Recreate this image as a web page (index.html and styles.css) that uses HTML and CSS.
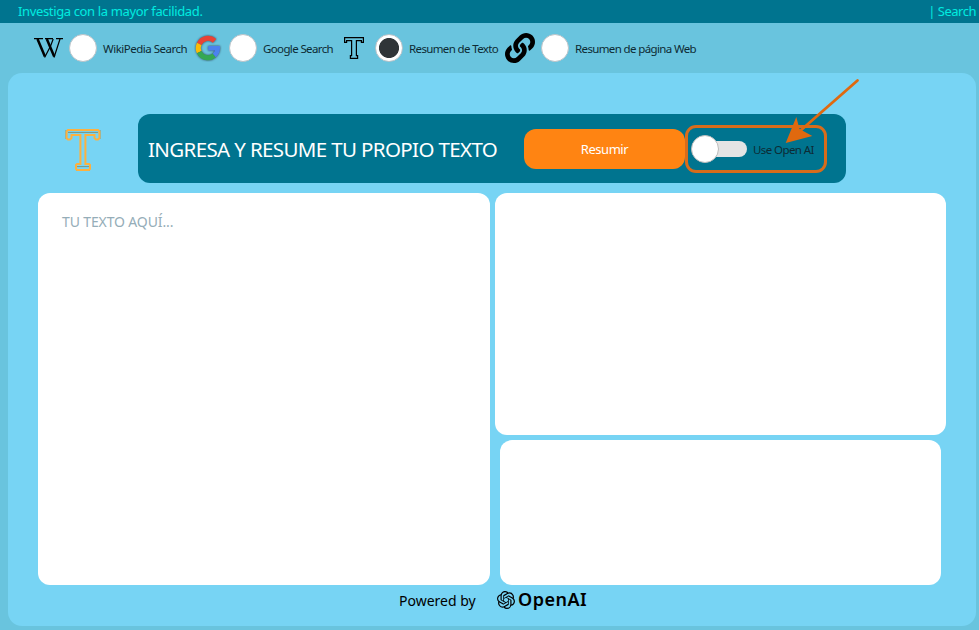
FILE: index.html
```html
<!DOCTYPE html>
<html lang="es">
<head>
<meta charset="utf-8">
<title>Search</title>
<link rel="stylesheet" href="styles.css">
</head>
<body>
<header class="titlebar"><span class="slogan">Investiga con la mayor facilidad.</span><span class="search">| Search</span></header>
<nav class="modes">
  <label class="mode mode-wiki">
    <svg class="icon" width="30" height="24" viewBox="0 0 30 24" fill="none" stroke="#000"><path d="M0 2.6h9M11 2.6h8M22 2.6h7" stroke-width="1.3"/><path d="M3.5 3l7.4 17.5M12.8 3l7.4 17.5" stroke-width="2.5"/><path d="M10.6 21.5l6-11.5 2.6-7M20 21.5L26 3" stroke-width="1.2"/></svg>
    <span class="radio"></span><span class="caption">WikiPedia Search</span>
  </label>
  <label class="mode mode-google">
    <svg class="icon" width="28" height="28" viewBox="0 0 28 28" fill="none" stroke-width="5"><g class="shadow"><path stroke="#ea4335" d="M5.2 10A9.7 9.7 0 0 1 20.6 6.9"/><path stroke="#fbbc05" d="M5.2 18.2A9.7 9.7 0 0 1 5.2 9.8"/><path stroke="#34a853" d="M20.4 21.3A9.7 9.7 0 0 1 5.2 18.1"/><path stroke="#4c82ee" d="M14.2 14.2H23.7A9.7 9.7 0 0 1 20.3 21.4" stroke-width="4.6"/></g></svg>
    <span class="radio"></span><span class="caption">Google Search</span>
  </label>
  <label class="mode mode-text">
    <svg class="icon" width="20" height="22" viewBox="0 0 20 22" fill="none" stroke="#000" stroke-width="1.2"><path d="M.6.6H19.4V5.4H17.4V3.6H12.4V18.6H13.6V21.4H6.4V18.6H7.6V3.6H2.6V5.4H.6Z"/></svg>
    <span class="radio on"></span><span class="caption">Resumen de Texto</span>
  </label>
  <label class="mode mode-web">
    <svg class="icon" width="30" height="30" viewBox="0 0 512 512"><path d="M326.612 185.391c59.747 59.809 58.927 155.698.36 214.59-.11.12-.24.25-.36.37l-67.2 67.2c-59.27 59.27-155.699 59.262-214.96 0-59.27-59.26-59.27-155.7 0-214.96l37.106-37.106c9.84-9.84 26.786-3.3 27.294 10.606.648 17.722 3.826 35.527 9.69 52.721 1.986 5.822.567 12.262-3.783 16.612l-13.087 13.087c-28.026 28.026-28.905 73.66-1.155 101.96 28.024 28.579 74.086 28.749 102.325.51l67.2-67.19c28.191-28.191 28.073-73.757 0-101.83-3.701-3.694-7.429-6.564-10.341-8.569a16.037 16.037 0 0 1-6.947-12.606c-.396-10.567 3.348-21.456 11.698-29.806l21.054-21.055c5.521-5.521 14.182-6.199 20.584-1.731a152.482 152.482 0 0 1 20.522 17.197zM467.547 44.449c-59.261-59.262-155.69-59.27-214.96 0l-67.2 67.2c-.12.12-.25.25-.36.37-58.566 58.892-59.387 154.781.36 214.59a152.454 152.454 0 0 0 20.521 17.196c6.402 4.468 15.064 3.789 20.584-1.731l21.054-21.055c8.35-8.35 12.094-19.239 11.698-29.806a16.037 16.037 0 0 0-6.947-12.606c-2.912-2.005-6.64-4.875-10.341-8.569-28.073-28.073-28.191-73.639 0-101.83l67.2-67.19c28.239-28.239 74.3-28.069 102.325.51 27.75 28.3 26.872 73.934-1.155 101.96l-13.087 13.087c-4.35 4.35-5.769 10.79-3.783 16.612 5.864 17.194 9.042 34.999 9.69 52.721.509 13.906 17.454 20.446 27.294 10.606l37.106-37.106c59.271-59.259 59.271-155.699.001-214.959z"/></svg>
    <span class="radio"></span><span class="caption">Resumen de página Web</span>
  </label>
</nav>
<main class="panel">
  <div class="top">
    <svg class="bigicon" width="36" height="42" viewBox="0 0 36 42" fill="none" stroke-width="2"><path stroke="#7c9583" d="M1 1V10M35 1V10M3 3.4H33M12 37.6H24M11 41.2H25" stroke-width="1"/><path stroke="#fdb140" d="M3 1H33L34.4 2.4V9L33 10.5H31L29.5 9V6H20.4V35H24L25 36V39.8L24 41H12L11 39.8V36L12 35H15.4V6H6.5V9L5 10.5H3L1.6 9V2.4Z"/></svg>
    <div class="bar">
      <h1>INGRESA Y RESUME TU PROPIO TEXTO</h1>
      <button class="go">Resumir</button>
      <div class="ai"><span class="switch"><span class="knob"></span><span class="track"></span></span><span class="ailabel">Use Open AI</span></div>
    </div>
  </div>
  <div class="boxes">
    <div class="box input">TU TEXTO AQUÍ...</div>
    <div class="side"><div class="box result"></div><div class="box extra"></div></div>
  </div>
  <footer><span class="powered">Powered by</span>
    <svg width="18" height="18" viewBox="0 0 24 24"><path d="M22.2819 9.8211a5.9847 5.9847 0 0 0-.5157-4.9108 6.0462 6.0462 0 0 0-6.5098-2.9A6.0651 6.0651 0 0 0 4.9807 4.1818a5.9847 5.9847 0 0 0-3.9977 2.9 6.0462 6.0462 0 0 0 .7427 7.0966 5.98 5.98 0 0 0 .511 4.9107 6.051 6.051 0 0 0 6.5146 2.9001A5.9847 5.9847 0 0 0 13.2599 24a6.0557 6.0557 0 0 0 5.7718-4.2058 5.9894 5.9894 0 0 0 3.9977-2.9001 6.0557 6.0557 0 0 0-.7475-7.0729zm-9.022 12.6081a4.4755 4.4755 0 0 1-2.8764-1.0408l.1419-.0804 4.7783-2.7582a.7948.7948 0 0 0 .3927-.6813v-6.7369l2.02 1.1686a.071.071 0 0 1 .038.052v5.5826a4.504 4.504 0 0 1-4.4945 4.4944zm-9.6607-4.1254a4.4708 4.4708 0 0 1-.5346-3.0137l.142.0852 4.783 2.7582a.7712.7712 0 0 0 .7806 0l5.8428-3.3685v2.3324a.0804.0804 0 0 1-.0332.0615L9.74 19.9502a4.4992 4.4992 0 0 1-6.1408-1.6464zM2.3408 7.8956a4.485 4.485 0 0 1 2.3655-1.9728V11.6a.7664.7664 0 0 0 .3879.6765l5.8144 3.3543-2.0201 1.1685a.0757.0757 0 0 1-.071 0l-4.8303-2.7865A4.504 4.504 0 0 1 2.3408 7.872zm16.5963 3.8558L13.1038 8.364 15.1192 7.2a.0757.0757 0 0 1 .071 0l4.8303 2.7913a4.4944 4.4944 0 0 1-.6765 8.1042v-5.6772a.79.79 0 0 0-.407-.667zm2.0107-3.0231l-.142-.0852-4.7735-2.7818a.7759.7759 0 0 0-.7854 0L9.409 9.2297V6.8974a.0662.0662 0 0 1 .0284-.0615l4.8303-2.7866a4.4992 4.4992 0 0 1 6.6802 4.66zM8.3065 12.863l-2.02-1.1638a.0804.0804 0 0 1-.038-.0567V6.0742a4.4992 4.4992 0 0 1 7.3757-3.4537l-.142.0805L8.704 5.459a.7948.7948 0 0 0-.3927.6813zm1.0976-2.3654l2.602-1.4998 2.6069 1.4998v2.9994l-2.5974 1.4997-2.6067-1.4997Z"/></svg>
    <span class="openai">OpenAI</span>
  </footer>
</main>
<svg class="arrow" width="80" height="70" viewBox="0 0 80 70"><path d="M75.5 5.5L18 56" stroke="#e0690f" stroke-width="2.8" stroke-linecap="round"/><path fill="#e0690f" d="M3.7 68L14.3 42L17.5 54L30.3 61Z"/></svg>
</body>
</html>
```
FILE: styles.css
```css
* { box-sizing: border-box; }
body { margin: 0; width: 979px; height: 630px; overflow: hidden; background: #69c4de; font-family: "Noto Sans", sans-serif; white-space: nowrap; }
.titlebar { height: 23px; padding: 0 3px 0 18px; display: flex; justify-content: space-between; background: #00748f; color: #00ece0; font-size: 13px; line-height: 22px; }
.slogan { letter-spacing: -.36px; }
.search { letter-spacing: -.5px; }
.modes { height: 50px; display: flex; align-items: center; padding-left: 34px; }
.mode { display: flex; align-items: center; height: 50px; }
.mode-wiki { width: 160px; }
.mode-google { width: 150px; }
.mode-text { width: 161px; }
.icon { flex: none; }
.radio { width: 28px; height: 28px; flex: none; border: 1.5px solid #bbc3c8; border-radius: 50%; background: #fff; margin: 0 6px 0 5px; }
.mode-google .radio { margin-left: 7px; }
.mode-text .radio { margin-left: 11px; }
.mode-web .radio { margin-left: 6px; }
.radio.on { background: radial-gradient(circle, #303538 9.6px, #fff 10.4px); }
.shadow { filter: drop-shadow(0 0 1px #345); }
.caption { font-size: 11.5px; color: #0d2b34; letter-spacing: -.63px; }
.mode-wiki .caption { letter-spacing: -.5px; }
.panel { margin: 0 3px 0 8px; height: 553px; border-radius: 14px; background: #77d4f4; padding: 41px 30px 0; }
.top { display: flex; height: 69px; }
.bigicon { margin: 15px 37.5px 0 26.5px; flex: none; }
.bar { width: 708px; height: 69px; border-radius: 12px; background: #00748f; display: flex; align-items: center; padding-left: 10px; }
h1 { margin: 0; width: 376px; font-size: 20.5px; font-weight: 400; color: #fff; line-height: 28px; letter-spacing: -.63px; }
.go { width: 161px; height: 40px; border: 0; border-radius: 12px; background: #ff8412; color: #fff; font: 13px "Noto Sans", sans-serif; letter-spacing: -.45px; padding: 0; }
.ai { width: 142px; height: 48px; margin-top: 1px; border: 3px solid #d86c1b; border-radius: 11px; display: flex; align-items: center; padding-left: 3px; }
.switch { width: 56px; height: 28px; display: flex; align-items: center; margin-top: -1px; }
.knob { width: 28px; height: 28px; flex: none; border-radius: 50%; border: 1px solid #bbb; background: #fff; z-index: 1; }
.track { width: 38px; height: 16px; margin-left: -10px; border-radius: 8px; background: #e4e4e4; }
.ailabel { margin-left: 6px; font-size: 11.5px; color: #0d2b34; letter-spacing: -.58px; }
.boxes { display: flex; gap: 5px; margin-top: 10px; }
.box { background: #fff; border-radius: 12px; }
.input { width: 452px; height: 392px; padding: 18px 24px; font-size: 14px; line-height: 22px; color: #95adb8; letter-spacing: -.13px; }
.result { width: 451px; height: 242px; }
.extra { width: 441px; height: 145px; margin: 5px 0 0 5px; }
footer { display: flex; align-items: center; height: 30px; padding-left: 361px; color: #000; }
.powered { width: 98px; font-size: 14px; margin-top: 1px; }
.openai { margin: -2px 0 0 3px; font-size: 18px; font-weight: 600; letter-spacing: .5px; }
.arrow { position: absolute; left: 782px; top: 75px; }
```
